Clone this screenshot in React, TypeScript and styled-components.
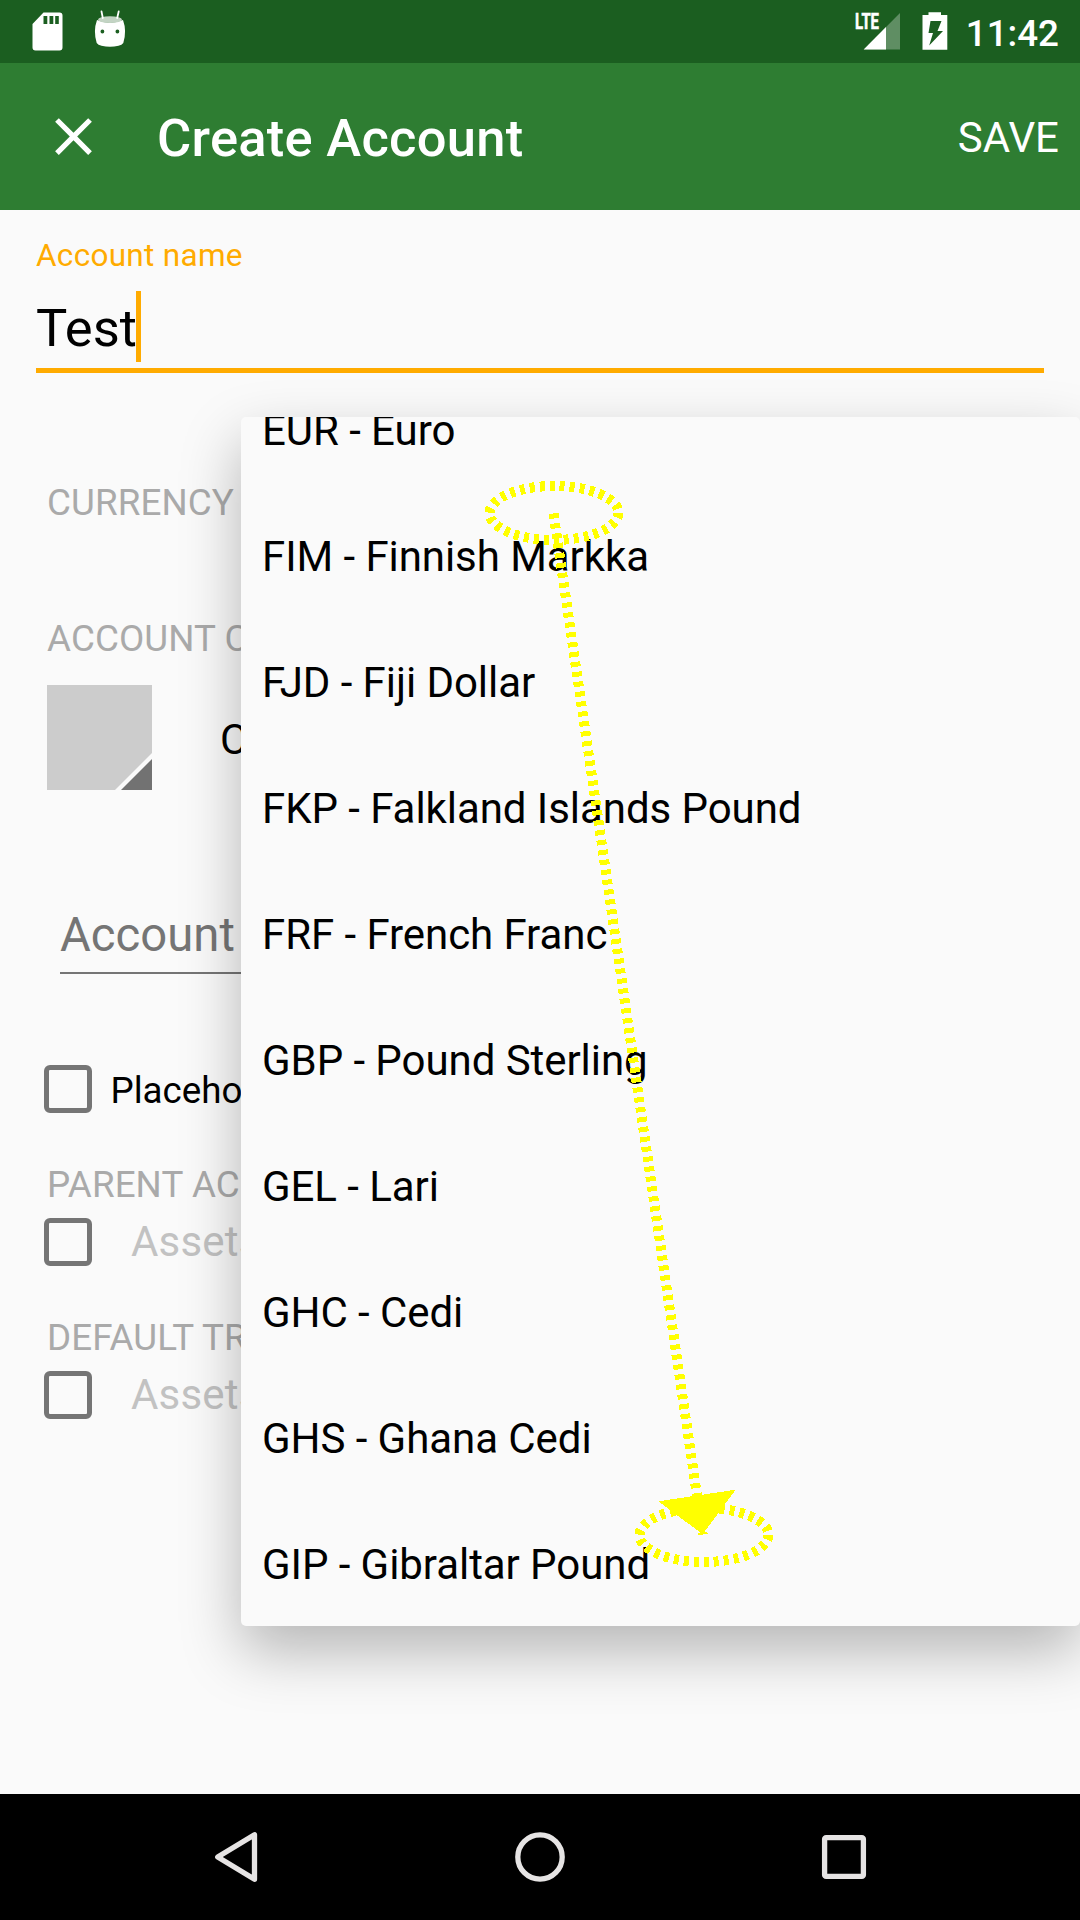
import React from "react";
import styled, { createGlobalStyle } from "styled-components";

const Global = createGlobalStyle`
  * { box-sizing: border-box; }
  body { margin: 0; background: #fafafa; font-family: Roboto, "Noto Sans", sans-serif; }
`;

const Screen = styled.div`
  position: relative;
  width: 1080px;
  height: 1920px;
  overflow: hidden;
  display: flex;
  flex-direction: column;
  background: #fafafa;
  color: #000;
`;

const StatusBar = styled.header`
  height: 63px;
  flex: none;
  display: flex;
  justify-content: space-between;
  align-items: center;
  padding: 0 21px 0 31px;
  background: #1b5e20;
`;

const StatusGroup = styled.div<{ $gap: number }>`
  display: flex;
  align-items: center;
  gap: ${(p) => p.$gap}px;
`;

const Clock = styled.span`
  color: #fff;
  font-size: 36.75px;
  font-weight: 500;
  line-height: 43px;
  padding-top: 3px;
`;

const Toolbar = styled.div`
  height: 147px;
  flex: none;
  display: flex;
  align-items: center;
  padding: 0 21px 0 42px;
  background: #2e7d32;
  color: #fff;
`;

const Title = styled.h1`
  flex: 1;
  margin: 0;
  padding: 2px 0 0 52px;
  font-size: 52.5px;
  line-height: 62px;
  font-weight: 500;
  letter-spacing: 0.27px;
`;

const SaveButton = styled.button`
  border: 0;
  background: none;
  padding: 2px 0 0;
  color: #fff;
  font: 400 42px/50px Roboto, "Noto Sans", sans-serif;
`;

const Form = styled.main`
  flex: 1;
  display: flex;
  flex-direction: column;
  align-items: flex-start;
  white-space: nowrap;
`;

const NameField = styled.div`
  width: 1008px;
  margin: 27px 0 0 36px;
  height: 136px;
  display: flex;
  flex-direction: column;
  border-bottom: 5px solid #ffab00;
`;

const FloatingLabel = styled.label`
  font-size: 31.5px;
  line-height: 38px;
  letter-spacing: 0.3px;
  color: #ffab00;
`;

const InputLine = styled.div`
  display: flex;
  align-items: flex-start;
  margin-top: 16px;
  height: 71px;
  font-size: 52.5px;
  line-height: 75px;
`;

const Caret = styled.span`
  width: 5px;
  height: 71px;
  margin-left: -1px;
  background: #ffab00;
`;

const SectionLabel = styled.div<{ $top: number }>`
  margin: ${(p) => p.$top}px 0 0 47px;
  font-size: 36.75px;
  line-height: 44px;
  letter-spacing: 0.1px;
  color: #aaa;
  text-transform: uppercase;
`;

const ColorRow = styled.div`
  display: flex;
  align-items: center;
  gap: 68px;
  margin: 24px 0 0 47px;
  height: 105px;
`;

const ColorLabel = styled.span`
  padding-top: 4px;
  font-size: 42px;
  line-height: 50px;
`;

const DescriptionField = styled.div`
  width: 960px;
  margin: 116px 0 0 60px;
  padding-top: 1px;
  height: 68px;
  border-bottom: 2.6px solid #757575;
  font-size: 47.25px;
  line-height: 56px;
  color: #757575;
`;

const CheckRow = styled.div<{ $top: number; $gap: number }>`
  display: flex;
  align-items: center;
  gap: ${(p) => p.$gap}px;
  margin: ${(p) => p.$top}px 0 0 44px;
  height: 48px;
`;

const CheckBox = styled.span`
  width: 48px;
  height: 48px;
  border: 5.3px solid #757575;
  border-radius: 6px;
`;

const CheckLabel = styled.span<{ $muted?: boolean }>`
  padding-top: ${(p) => (p.$muted ? 0 : 4)}px;
  font-size: ${(p) => (p.$muted ? 42 : 36.75)}px;
  letter-spacing: ${(p) => (p.$muted ? 0.2 : 0)}px;
  line-height: 50px;
  color: ${(p) => (p.$muted ? "#c2c2c2" : "#000")};
`;

const Dropdown = styled.ul`
  position: absolute;
  left: 241px;
  top: 417px;
  width: 839px;
  height: 1209px;
  margin: 0;
  padding: 0;
  list-style: none;
  overflow: hidden;
  display: flex;
  flex-direction: column;
  justify-content: flex-end;
  border-radius: 5px;
  background: #fafafa;
  box-shadow: 0 25px 60px rgba(0, 0, 0, 0.28);
`;

const Option = styled.li`
  flex: none;
  height: 126px;
  padding: 2px 21px 0;
  display: flex;
  align-items: center;
  font-size: 42px;
  letter-spacing: -0.06px;
`;

const NavBar = styled.nav`
  height: 126px;
  flex: none;
  display: flex;
  justify-content: space-between;
  align-items: center;
  padding: 0 204px;
  background: #000;
`;

const Gesture = styled.svg`
  position: absolute;
  inset: 0;
  pointer-events: none;
`;

const currencies = [
  "EUR - Euro",
  "FIM - Finnish Markka",
  "FJD - Fiji Dollar",
  "FKP - Falkland Islands Pound",
  "FRF - French Franc",
  "GBP - Pound Sterling",
  "GEL - Lari",
  "GHC - Cedi",
  "GHS - Ghana Cedi",
  "GIP - Gibraltar Pound",
];

const SdCardIcon = () => (
  <svg width="34" height="63" viewBox="31 0 34 63">
    <path
      fill="#fff"
      fillRule="evenodd"
      d="M43.5 12.5H59.5a3 3 0 0 1 3 3V47.500a3 3 0 0 1-3 3H35.500a3 3 0 0 1-3-3V24zM43.500 16v8h3.800v-8zM49.500 16v8h3.800v-8zM55.200 16v8h3.600v-8z"
    />
  </svg>
);

const AndroidIcon = () => (
  <svg width="34" height="63" viewBox="93.500 0 34 63">
    <path
      fill="#fff"
      fillRule="evenodd"
      d="M97.500 20Q110 25.500 123.500 20Q127.500 31 123.800 43Q122.500 45 119 45.800Q110.500 47.500 102 45.800Q98.500 45 97.200 43Q93.500 31 97.500 20zM101 31.500a1.900 1.900 0 1 0 3.800 0a1.900 1.900 0 1 0-3.800 0M116 31.500a1.900 1.900 0 1 0 3.800 0a1.900 1.900 0 1 0-3.800 0"
    />
    <ellipse cx="110.500" cy="19.700" rx="12" ry="3.400" fill="#c3d4c4" />
    <path d="M102 11.500L103.300 18M119.200 11.500L117.700 18" stroke="#fff" strokeWidth="1.800" strokeLinecap="round" />
  </svg>
);

const SignalIcon = () => (
  <svg width="49.5" height="63" viewBox="854 0 49.5 63">
    <path d="M900 13V49.500H863.700z" fill="#fff" fillOpacity=".3" />
    <path d="M886 27V49.500H863.700z" fill="#fff" />
    <text
      x="855"
      y="29.300"
      textLength="24"
      lengthAdjust="spacingAndGlyphs"
      fill="#fff"
      stroke="#fff"
      strokeWidth=".6"
      fontFamily="Roboto, sans-serif"
      fontWeight="700"
      fontSize="22"
    >
      LTE
    </text>
  </svg>
);

const BatteryIcon = () => (
  <svg width="26" height="63" viewBox="921.500 0 26 63">
    <path
      fill="#fff"
      fillRule="evenodd"
      d="M928 12.300h12.500V15h6.300V49.800H922V15h6zM930 21l-2 12h4.500l-3.800 12.500L942.500 31H937l4-10z"
    />
  </svg>
);

const CloseIcon = () => (
  <svg width="63" height="63" viewBox="0 0 24 24">
    <path
      fill="#fff"
      d="M19 6.410L17.590 5 12 10.590 6.410 5 5 6.410 10.590 12 5 17.590 6.410 19 12 13.410 17.590 19 19 17.590 13.410 12z"
    />
  </svg>
);

const ColorSwatch = () => (
  <svg width="105" height="105">
    <rect width="105" height="105" fill="#ccc" />
    <path d="M105 68V105H68z" fill="#fafafa" />
    <path d="M105 74V105H74z" fill="#727272" />
  </svg>
);

const navStroke = { fill: "none", stroke: "#e6e4e4", strokeWidth: 5.3 };

export default function App() {
  return (
    <Screen>
      <Global />
      <StatusBar>
        <StatusGroup $gap={28}>
          <SdCardIcon />
          <AndroidIcon />
        </StatusGroup>
        <StatusGroup $gap={18}>
          <SignalIcon />
          <BatteryIcon />
          <Clock>11:42</Clock>
        </StatusGroup>
      </StatusBar>
      <Toolbar>
        <CloseIcon />
        <Title>Create Account</Title>
        <SaveButton>SAVE</SaveButton>
      </Toolbar>
      <Form>
        <NameField>
          <FloatingLabel>Account name</FloatingLabel>
          <InputLine>
            Test
            <Caret />
          </InputLine>
        </NameField>
        <SectionLabel $top={108}>Currency</SectionLabel>
        <SectionLabel $top={92}>Account color</SectionLabel>
        <ColorRow>
          <ColorSwatch />
          <ColorLabel>Color</ColorLabel>
        </ColorRow>
        <DescriptionField>Account description</DescriptionField>
        <CheckRow $top={91} $gap={18.5}>
          <CheckBox />
          <CheckLabel>Placeholder account</CheckLabel>
        </CheckRow>
        <SectionLabel $top={50}>Parent account</SectionLabel>
        <CheckRow $top={11} $gap={39}>
          <CheckBox />
          <CheckLabel $muted>Assets</CheckLabel>
        </CheckRow>
        <SectionLabel $top={50}>Default transfer account</SectionLabel>
        <CheckRow $top={11} $gap={39}>
          <CheckBox />
          <CheckLabel $muted>Assets</CheckLabel>
        </CheckRow>
      </Form>
      <NavBar>
        <svg width="64" height="64" viewBox="204 1825 64 64">
          <path d="M254.500 1834.700V1879.300L217.700 1857z" {...navStroke} strokeLinejoin="round" />
        </svg>
        <svg width="64" height="64" viewBox="508 1825 64 64">
          <circle cx="540" cy="1857" r="22.200" {...navStroke} />
        </svg>
        <svg width="64" height="64" viewBox="812 1825 64 64">
          <rect x="824.600" y="1837.600" width="38.800" height="38.800" rx="1.500" {...navStroke} />
        </svg>
      </NavBar>
      <Dropdown>
        {currencies.map((c) => (
          <Option key={c}>{c}</Option>
        ))}
      </Dropdown>
      <Gesture width="1080" height="1920" shapeRendering="crispEdges">
        <g fill="none" stroke="#ff0" strokeWidth="10" strokeDasharray="5 5">
          <ellipse cx="554" cy="513" rx="64.500" ry="27" />
          <ellipse cx="704" cy="1535" rx="64.500" ry="27" />
          <path d="M553.500 513.500L702.700 1534.500" />
        </g>
        <path d="M658.300 1501.300L735.700 1489.700L702.700 1534.300z" fill="#ff0" />
      </Gesture>
    </Screen>
  );
}
